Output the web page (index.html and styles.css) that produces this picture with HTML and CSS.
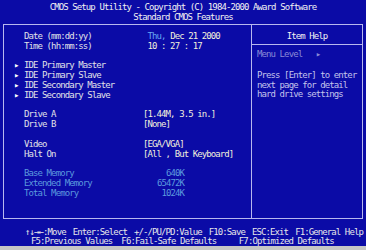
FILE: index.html
```html
<!DOCTYPE html>
<html lang="en">
<head>
  <meta charset="UTF-8">
  <title>CMOS Setup Utility</title>
  <link rel="stylesheet" href="styles.css">
</head>
<body>
  <div class="screen">
    <div class="title">
      <div>CMOS Setup Utility - Copyright (C) 1984-2000 Award Software</div>
      <div>Standard CMOS Features</div>
    </div>

    <div class="frame">
      <div class="items">
        <div class="row"><span></span><span>Date (mm:dd:yy)</span><span class="val"> <span class="wday">Thu,</span> Dec 21 2000</span></div>
        <div class="row"><span></span><span>Time (hh:mm:ss)</span><span class="val"> 10 : 27 : 17</span></div>
        <div class="gap"></div>
        <div class="row"><span class="mark">▸</span><span>IDE Primary Master</span><span></span></div>
        <div class="row"><span class="mark">▸</span><span>IDE Primary Slave</span><span></span></div>
        <div class="row"><span class="mark">▸</span><span>IDE Secondary Master</span><span></span></div>
        <div class="row"><span class="mark">▸</span><span>IDE Secondary Slave</span><span></span></div>
        <div class="gap"></div>
        <div class="row"><span></span><span>Drive A</span><span class="val">[1.44M, 3.5 in.]</span></div>
        <div class="row"><span></span><span>Drive B</span><span class="val">[None]</span></div>
        <div class="gap"></div>
        <div class="row"><span></span><span>Video</span><span class="val">[EGA/VGA]</span></div>
        <div class="row"><span></span><span>Halt On</span><span class="val">[All , But Keyboard]</span></div>
        <div class="gap"></div>
        <div class="row dim"><span></span><span>Base Memory</span><span class="num">640K</span></div>
        <div class="row dim"><span></span><span>Extended Memory</span><span class="num">65472K</span></div>
        <div class="row dim"><span></span><span>Total Memory</span><span class="num">1024K</span></div>
      </div>

      <div class="help">
        <div class="help-head">Item Help</div>
        <div class="menu-level">Menu Level   ▸</div>
        <div class="help-text">
          <div>Press [Enter] to enter</div>
          <div>next page for detail</div>
          <div>hard drive settings</div>
        </div>
      </div>
    </div>

    <div class="keys">
      <div class="keys-top">
        <span>↑↓→←:Move</span>
        <span>Enter:Select</span>
        <span>+/-/PU/PD:Value</span>
        <span>F10:Save</span>
        <span>ESC:Exit</span>
        <span>F1:General Help</span>
      </div>
      <div class="keys-bottom">F5:Previous Values  F6:Fail-Safe Defaults     F7:Optimized Defaults</div>
    </div>

    <div class="strip"></div>
  </div>
</body>
</html>
```

FILE: styles.css
```css
body {
  margin: 0;
  background-color: #0b0ba6;
  color: #e2e2e8;
  font-family: "DejaVu Sans Mono", "Liberation Mono", monospace;
  font-size: 9px;
  letter-spacing: -0.9px;
  line-height: 10px;
  overflow: hidden;
}

.screen {
  width: 366px;
  height: 250px;
  display: flex;
  flex-direction: column;
}

.title {
  padding-top: 2px;
  text-align: center;
  color: #f2f2f2;
}

.frame {
  margin: 2px 3px 0 3px;
  height: 195px;
  box-sizing: border-box;
  border: 1px solid #b8b8ee;
  display: grid;
  grid-template-columns: 247px 1fr;
}

.items {
  padding-top: 6px;
}

.row {
  display: grid;
  grid-template-columns: 20px 119px auto;
  height: 9.8px;
  white-space: pre;
}

.gap {
  height: 9.8px;
}

.mark {
  padding-left: 10px;
  color: #ffffff;
}

.val {
  color: #f2f0dc;
}

.wday {
  color: #68a8f4;
}

.dim {
  color: #5c9ade;
}

.num {
  width: 41px;
  text-align: right;
}

.help {
  border-left: 1px solid #b8b8ee;
}

.help-head {
  text-align: center;
  color: #f2f2f2;
  padding: 6px 0 3px;
  border-bottom: 1px solid #b8b8ee;
}

.menu-level {
  padding: 4px 0 0 5px;
  white-space: pre;
  color: #8a8ad6;
}

.help-text {
  margin-top: 12px;
  padding-left: 5px;
  color: #c4c4ec;
  line-height: 9.7px;
}

.keys {
  margin-top: 9px;
  line-height: 8.5px;
  color: #e6e6ea;
}

.keys-top {
  display: flex;
  justify-content: space-between;
  padding: 0 3px 0 25px;
}

.keys-bottom {
  padding-left: 31px;
  white-space: pre;
}

.strip {
  margin-top: auto;
  height: 4px;
  background-color: #c6c6c6;
}
```
